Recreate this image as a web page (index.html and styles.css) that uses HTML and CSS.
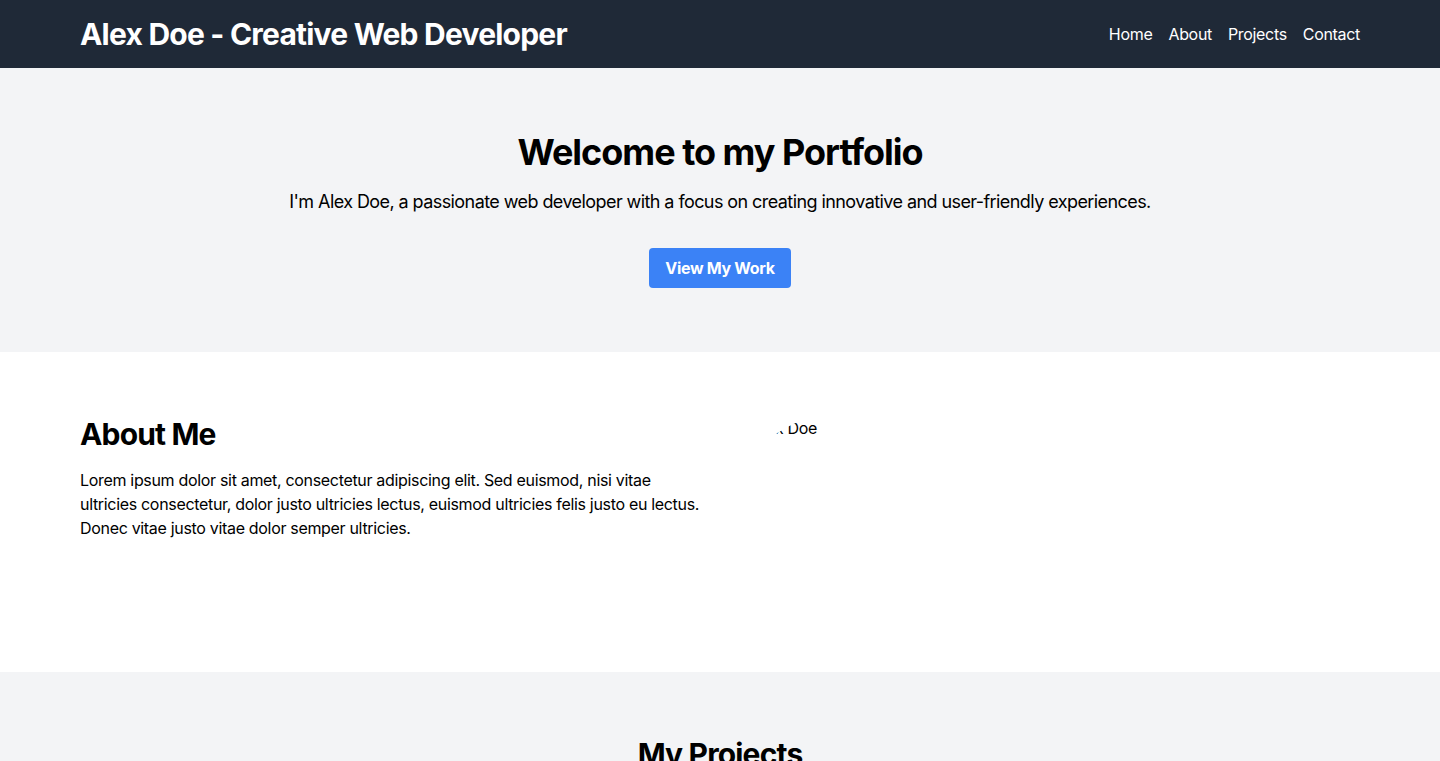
FILE: index.html
```html
<!DOCTYPE html>
<html lang="en">
<head>
  <meta charset="UTF-8" />
  <meta name="viewport" content="width=device-width, initial-scale=1.0"/>
  <title>Alex Doe - Creative Web Developer</title>
  <link rel="stylesheet" href="styles.css">
</head>
<body>
  <header class="site-header">
    <div class="container header-row">
      <h1 class="site-title">Alex Doe - Creative Web Developer</h1>
      <nav class="nav">
        <a href="#home">Home</a>
        <a href="#about">About</a>
        <a href="#projects">Projects</a>
        <a href="#contact">Contact</a>
      </nav>
    </div>
  </header>

  <section id="home" class="hero">
    <div class="container">
      <h2 class="hero-title">Welcome to my Portfolio</h2>
      <p class="hero-text">I'm Alex Doe, a passionate web developer with a focus on creating innovative and user-friendly experiences.</p>
      <a href="#projects" class="btn">View My Work</a>
    </div>
  </section>

  <section id="about" class="about">
    <div class="container about-grid">
      <div>
        <h2 class="section-title">About Me</h2>
        <p>Lorem ipsum dolor sit amet, consectetur adipiscing elit. Sed euismod, nisi vitae ultricies consectetur, dolor justo ultricies lectus, euismod ultricies felis justo eu lectus. Donec vitae justo vitae dolor semper ultricies.</p>
      </div>
      <div>
        <!-- profile picture did not load, only its alt text shows -->
        <div class="avatar"><span>Alex Doe</span></div>
      </div>
    </div>
  </section>

  <section id="projects" class="projects">
    <div class="container">
      <h2 class="section-title center">My Projects</h2>
      <div class="project-grid">
        <div class="project-card">
          <h3>Project One</h3>
          <p>A responsive landing page built with modern CSS.</p>
        </div>
        <div class="project-card">
          <h3>Project Two</h3>
          <p>A small web app for tracking daily tasks.</p>
        </div>
        <div class="project-card">
          <h3>Project Three</h3>
          <p>An interactive data dashboard with charts.</p>
        </div>
      </div>
    </div>
  </section>

  <section id="contact" class="contact">
    <div class="container">
      <h2 class="section-title center">Contact</h2>
      <p class="center">alex.doe@example.com</p>
    </div>
  </section>
</body>
</html>
```

FILE: styles.css
```css
* {
  box-sizing: border-box;
  margin: 0;
  padding: 0;
}

body {
  font-family: 'Inter', 'Liberation Sans', sans-serif;
  font-size: 16px;
  line-height: 24px;
  letter-spacing: -0.02em;
  color: #000;
  background: #fff;
}

a {
  color: inherit;
  text-decoration: none;
}

.container {
  max-width: 1280px;
  margin: 0 auto;
}

.site-header {
  background-color: #1f2937;
  color: white;
  padding: 16px 0;
}

.header-row {
  display: flex;
  justify-content: space-between;
  align-items: center;
}

.site-title {
  font-size: 30px;
  line-height: 36px;
  font-weight: 700;
  letter-spacing: -0.026em;
}

.nav {
  display: flex;
  gap: 16px;
  letter-spacing: -0.02em;
}

.hero {
  background-color: #f3f4f6;
  padding: 64px 0;
  text-align: center;
}

.hero-title {
  font-size: 36px;
  line-height: 40px;
  font-weight: 700;
  letter-spacing: -0.028em;
  margin-bottom: 16px;
}

.hero-text {
  font-size: 18px;
  line-height: 28px;
  letter-spacing: -0.032em;
  margin-bottom: 32px;
}

.btn {
  display: inline-block;
  background-color: #3b82f6;
  color: white;
  font-weight: 700;
  padding: 8px 16px;
  border-radius: 4px;
}

.about {
  padding: 64px 0;
}

.about-grid {
  display: grid;
  grid-template-columns: 1fr 1fr;
  gap: 32px;
}

.section-title {
  font-size: 30px;
  line-height: 36px;
  font-weight: 700;
  letter-spacing: -0.028em;
  margin-bottom: 16px;
}

.center {
  text-align: center;
}

.avatar {
  width: 192px;
  height: 192px;
  border-radius: 9999px;
  overflow: hidden;
}

.avatar span {
  display: block;
  padding-left: 16px;
  white-space: nowrap;
}

.projects {
  background-color: #f3f4f6;
  padding: 64px 0;
}

.projects .section-title {
  margin-bottom: 32px;
}

.project-grid {
  display: grid;
  grid-template-columns: repeat(3, 1fr);
  gap: 32px;
}

.project-card {
  background: white;
  padding: 24px;
  border-radius: 8px;
  box-shadow: 0 1px 3px rgba(0,0,0,0.1);
}

.project-card h3 {
  font-size: 20px;
  line-height: 28px;
  margin-bottom: 8px;
}

.contact {
  padding: 64px 0;
}
```
